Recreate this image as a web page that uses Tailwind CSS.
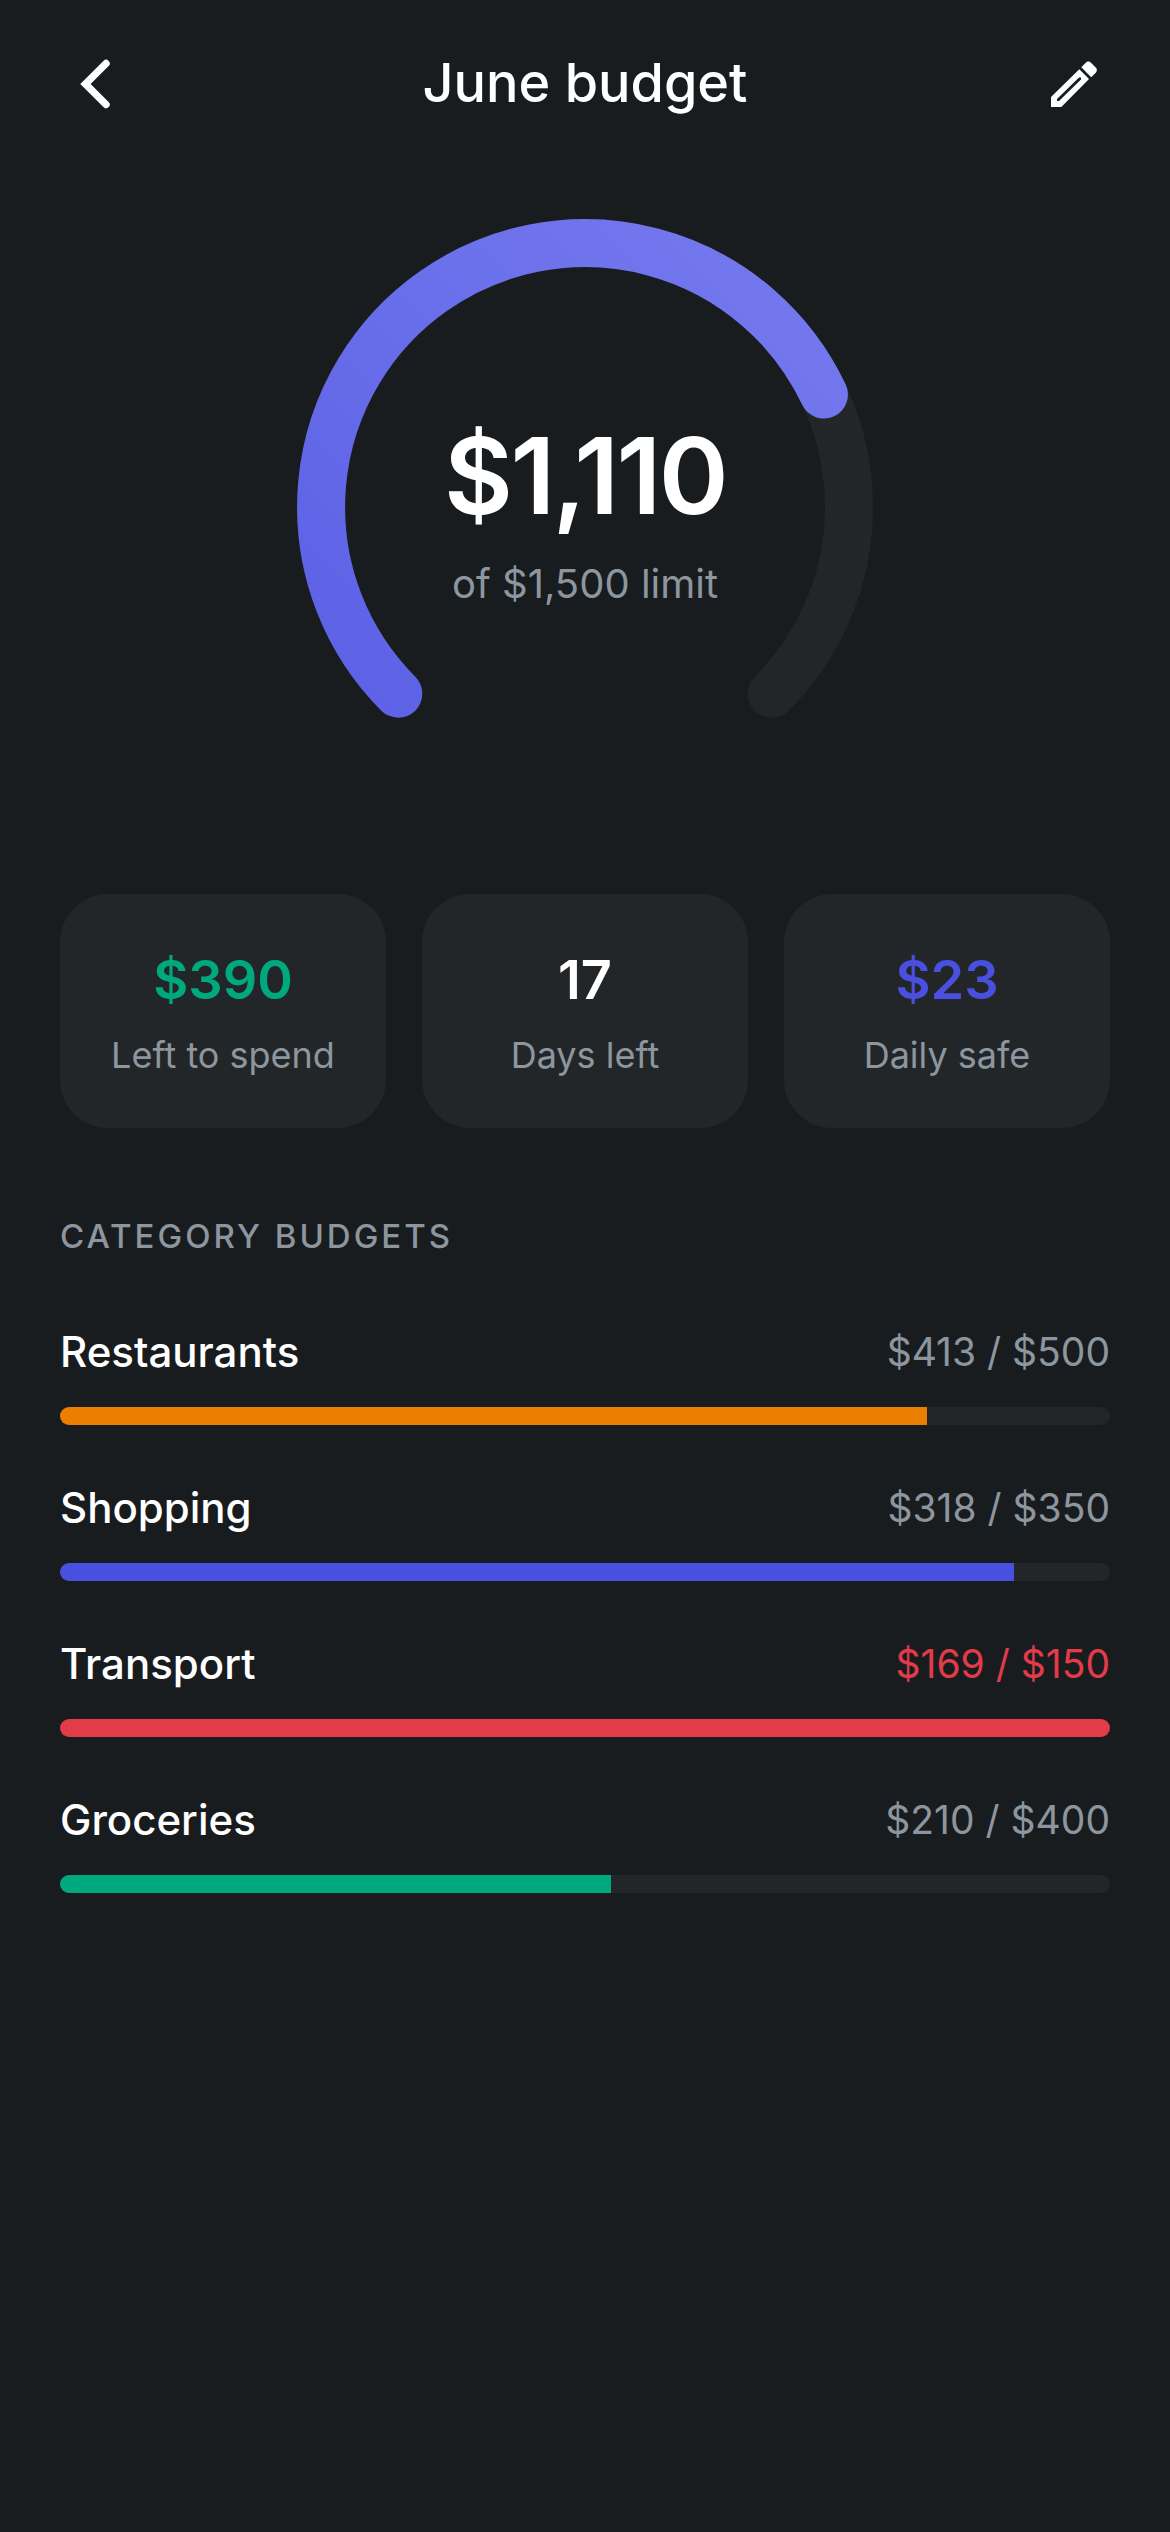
<!DOCTYPE html>
<html lang="en">
<head>
    <meta charset="UTF-8">
    <meta name="viewport" content="width=device-width, initial-scale=1.0">
    <title>June budget</title>
    <script src="https://cdn.jsdelivr.net/npm/@tailwindcss/browser@4"></script>
</head>
<body class="bg-[#191c1f] text-white font-['Inter',sans-serif] min-h-screen">
    <header class="flex items-center justify-between px-[60px] h-[165px]">
        <button type="button" aria-label="Back" class="w-[72px] h-[72px] flex items-center justify-center">
            <svg class="w-[72px] h-[72px]" viewBox="0 0 72 72" fill="none" stroke="currentColor" stroke-width="7.4" stroke-linecap="round">
                <path d="M46 16.500L25.500 37L46 57.500"/>
            </svg>
        </button>
        <h1 class="text-[54px] leading-[66px] font-medium">June budget</h1>
        <button type="button" aria-label="Edit budget" class="w-[72px] h-[72px] flex items-center justify-center">
            <svg class="w-[72px] h-[72px]" viewBox="0 0 72 72" fill="currentColor">
                <path fill-rule="evenodd" d="M41.300 22.200L51 32L23.300 60H13V50L41.300 22.200ZM41 30.500L19 52V54H21L43 32.500V30.500Z"/>
                <path d="M43.300 20.200L47.500 16Q50.300 13.200 53.200 16L57.500 20.300Q60.300 23 57.500 26L53.200 30.200Z"/>
            </svg>
        </button>
    </header>

    <main class="px-[60px]">
        <section class="relative mx-auto mt-[42px] w-[600px] h-[600px]">
            <svg class="w-full h-full" viewBox="0 0 600 600" fill="none" stroke-width="48" stroke-linecap="round">
                <defs>
                    <linearGradient id="spent" gradientUnits="userSpaceOnUse" x1="60" y1="480" x2="460" y2="80">
                        <stop offset="0" stop-color="#5d62e6"/>
                        <stop offset="1" stop-color="#7277ee"/>
                    </linearGradient>
                </defs>
                <path stroke="#232629" d="M113.300 486.700A264 264 0 1 1 486.700 486.700"/>
                <path stroke="url(#spent)" d="M113.300 486.700A264 264 0 1 1 538.900 187.600"/>
            </svg>
            <div class="absolute inset-0 pt-1 flex flex-col items-center justify-center gap-[18px]">
                <p class="text-[106px] leading-[132px] font-semibold tracking-tight">$1,110</p>
                <p class="text-[40px] leading-[48px] text-[#8d969e]">of $1,500 limit</p>
            </div>
        </section>

        <section class="grid grid-cols-3 gap-9 mt-[87px] text-center">
            <div class="bg-[#232629] rounded-[48px] py-12">
                <p class="text-[54px] leading-[76px] font-semibold text-[#00a87e]">$390</p>
                <p class="mt-3 text-[36px] leading-[50px] text-[#8d969e]">Left to spend</p>
            </div>
            <div class="bg-[#232629] rounded-[48px] py-12">
                <p class="text-[54px] leading-[76px] font-semibold">17</p>
                <p class="mt-3 text-[36px] leading-[50px] text-[#8d969e]">Days left</p>
            </div>
            <div class="bg-[#232629] rounded-[48px] py-12">
                <p class="text-[54px] leading-[76px] font-semibold text-[#494fdf]">$23</p>
                <p class="mt-3 text-[36px] leading-[50px] text-[#8d969e]">Daily safe</p>
            </div>
        </section>

        <section class="mt-[88px]">
            <h2 class="text-[33px] leading-[40px] font-medium tracking-[3px] uppercase text-[#8d969e]">Category budgets</h2>
            <ul class="mt-[71px] flex flex-col gap-[58px]">
                <li>
                    <div class="flex items-center justify-between leading-[50px]">
                        <span class="text-[42px] font-medium">Restaurants</span>
                        <span class="text-[39px] text-[#8d969e]">$413 / $500</span>
                    </div>
                    <div class="mt-[30px] h-[18px] rounded-full overflow-hidden bg-[#232629]">
                        <div class="h-full bg-[#ec7e00]" style="width: 82.6%"></div>
                    </div>
                </li>
                <li>
                    <div class="flex items-center justify-between leading-[50px]">
                        <span class="text-[42px] font-medium">Shopping</span>
                        <span class="text-[39px] text-[#8d969e]">$318 / $350</span>
                    </div>
                    <div class="mt-[30px] h-[18px] rounded-full overflow-hidden bg-[#232629]">
                        <div class="h-full bg-[#494fdf]" style="width: 90.9%"></div>
                    </div>
                </li>
                <li>
                    <div class="flex items-center justify-between leading-[50px]">
                        <span class="text-[42px] font-medium">Transport</span>
                        <span class="text-[39px] text-[#e23b4a]">$169 / $150</span>
                    </div>
                    <div class="mt-[30px] h-[18px] rounded-full overflow-hidden bg-[#232629]">
                        <div class="h-full bg-[#e23b4a]" style="width: 100%"></div>
                    </div>
                </li>
                <li>
                    <div class="flex items-center justify-between leading-[50px]">
                        <span class="text-[42px] font-medium">Groceries</span>
                        <span class="text-[39px] text-[#8d969e]">$210 / $400</span>
                    </div>
                    <div class="mt-[30px] h-[18px] rounded-full overflow-hidden bg-[#232629]">
                        <div class="h-full bg-[#00a87e]" style="width: 52.5%"></div>
                    </div>
                </li>
            </ul>
        </section>
    </main>
</body>
</html>
